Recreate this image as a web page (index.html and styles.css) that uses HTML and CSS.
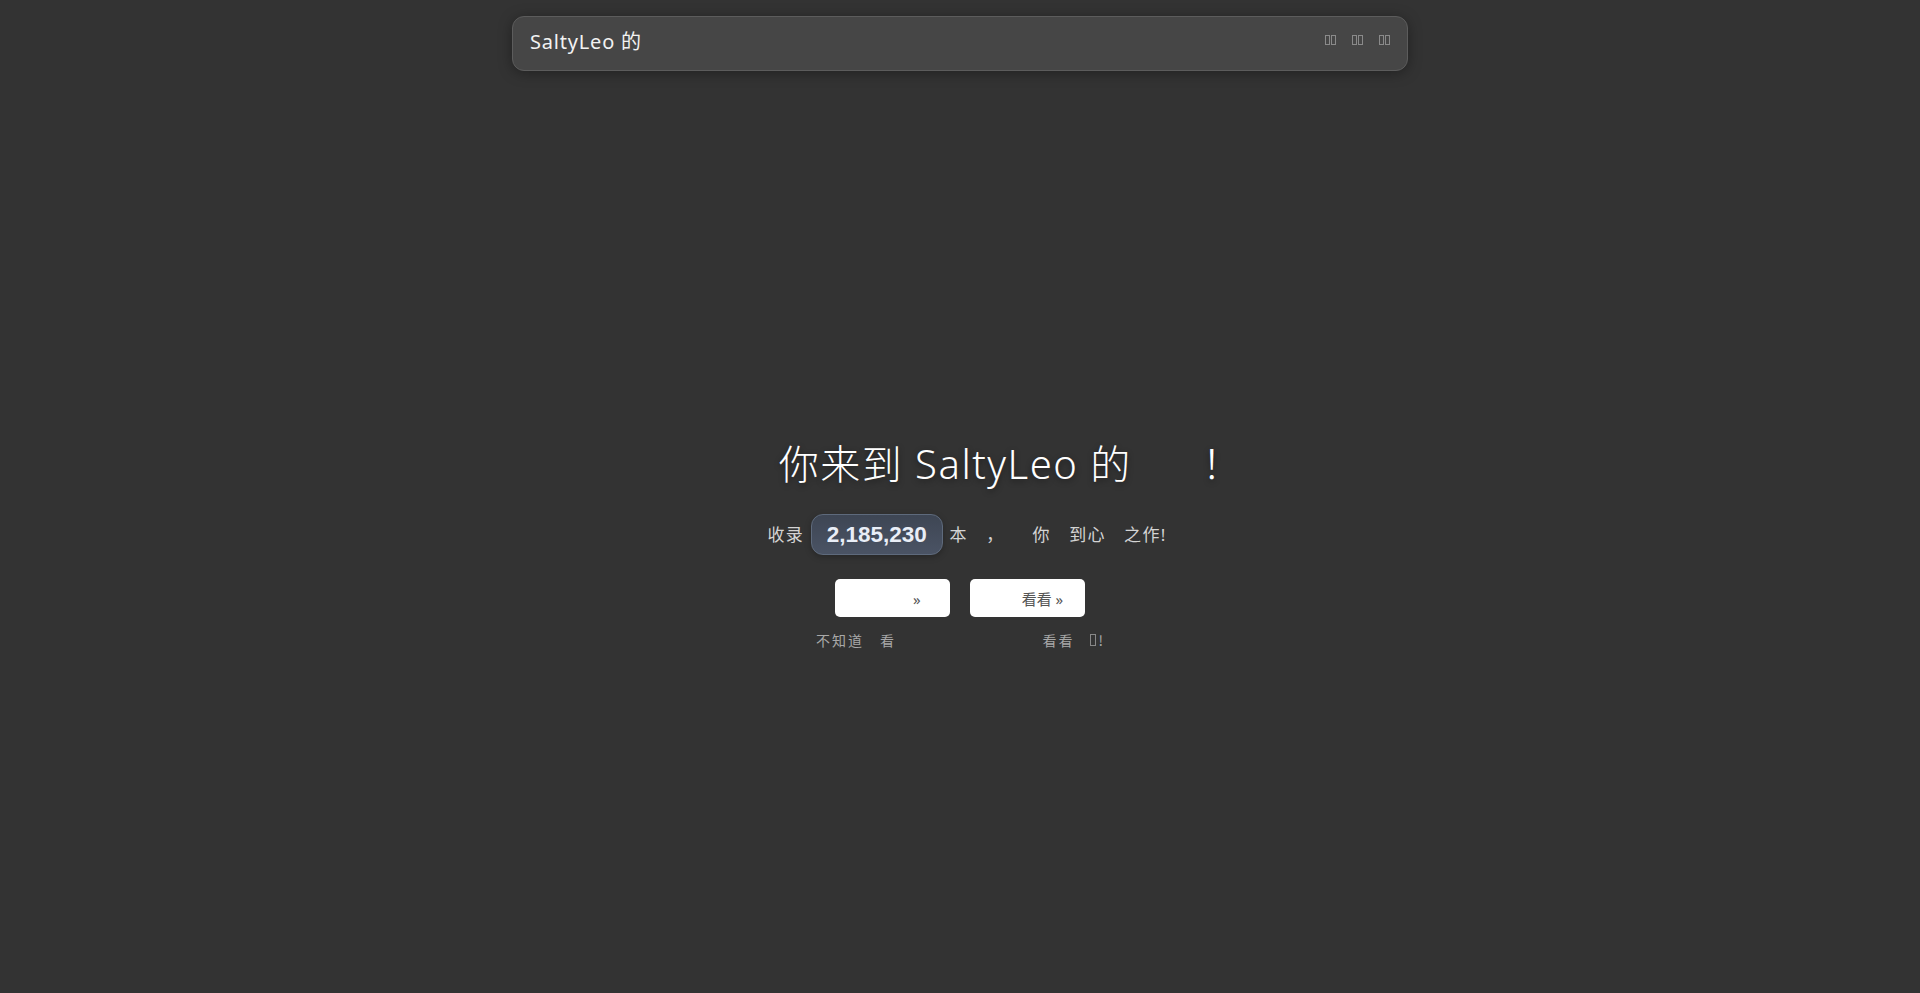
FILE: index.html
```html
<!DOCTYPE html>
<html lang="zh-CN">
<head>
    <meta charset="UTF-8">
    <meta name="viewport" content="width=device-width, initial-scale=1.0">
    <title>SaltyLeo 的</title>
    <link rel="stylesheet" href="styles.css">
</head>
<body>

    <!-- 顶栏 -->
    <header class="topbar">
        <div class="brand">SaltyLeo 的</div>
        <nav class="nav">
            <a href="#"><span class="tofu"></span><span class="tofu"></span></a>
            <a href="#"><span class="tofu"></span><span class="tofu"></span></a>
            <a href="#"><span class="tofu"></span><span class="tofu"></span></a>
        </nav>
    </header>

    <!-- 首屏 -->
    <main class="hero">
        <h1 class="hero-title"><span class="blank blank-lead"></span>你来到 SaltyLeo 的<span class="blank blank-mid"></span>！</h1>

        <p class="stats"><span class="blank blank-stats"></span>收录 <span class="count">2,185,230</span> 本　，　　你　到心　之作!</p>

        <div class="actions">
            <div class="action">
                <button class="btn">　　　 »</button>
                <div class="hint hint-left">不知道　看</div>
            </div>
            <div class="action">
                <button class="btn">　　看看 »</button>
                <div class="hint hint-right">看看　<span class="tofu"></span>!</div>
            </div>
        </div>
    </main>

</body>
</html>
```

FILE: styles.css
```css
body {
    margin: 0;
    background-color: #333;
    color: #eee;
    font-family: "Noto Sans", "Noto Sans CJK SC", sans-serif;
    min-height: 100vh;
}

/* 顶栏 */
.topbar {
    width: 896px;
    height: 55px;
    margin: 16px auto 0;
    box-sizing: border-box;
    padding: 0 17px;
    display: flex;
    align-items: center;
    justify-content: space-between;
    background-color: #464646;
    border: 1px solid #5c5c5c;
    border-radius: 12px;
    box-shadow: 0 2px 14px rgba(0, 0, 0, 0.35);
}

.brand {
    font-size: 20px;
    letter-spacing: 0.8px;
    color: #f2f2f2;
    margin-top: -7px;
}

.nav {
    display: flex;
    gap: 16px;
    margin-bottom: 8px;
}

.nav a {
    display: flex;
    gap: 1px;
    color: #8a8a8a;
    text-decoration: none;
}

.tofu {
    display: inline-block;
    width: 3px;
    height: 8px;
    border: 1px solid currentColor;
}

/* 首屏 */
.hero {
    display: flex;
    flex-direction: column;
    align-items: center;
    padding-top: 369px;
}

.hero-title {
    margin: 0;
    font-size: 40px;
    font-weight: 300;
    line-height: 48px;
    letter-spacing: 1.5px;
    color: #fff;
    text-shadow: 0 2px 6px rgba(0, 0, 0, 0.45);
    white-space: nowrap;
}

.blank {
    display: inline-block;
}

.blank-lead {
    width: 102px;
}

.blank-mid {
    width: 70px;
}

.blank-stats {
    width: 14px;
}

.stats {
    margin: 26px 0 0;
    height: 41px;
    line-height: 41px;
    font-size: 17px;
    color: #d4d4d4;
    letter-spacing: 1.3px;
    white-space: pre;
}

.count {
    margin: 0 1px;
    height: 41px;
    box-sizing: border-box;
    padding: 0 15px;
    display: inline-flex;
    align-items: center;
    vertical-align: top;
    font-family: "Liberation Sans", Arial, sans-serif;
    font-weight: bold;
    font-size: 22.5px;
    letter-spacing: 0;
    color: #e9eef7;
    background: linear-gradient(180deg, #3e4654, #4a5364);
    border: 1px solid #5e6a7c;
    border-radius: 12px;
    box-shadow: 0 2px 6px rgba(0, 0, 0, 0.25);
}

.actions {
    display: flex;
    gap: 20px;
    margin-top: 24px;
}

.action {
    width: 115px;
    display: flex;
    flex-direction: column;
    align-items: center;
}

.btn {
    width: 115px;
    height: 38px;
    border: none;
    border-radius: 5px;
    background-color: #fff;
    color: #555;
    font-family: "Noto Sans", "Noto Sans CJK SC", sans-serif;
    font-size: 15px;
    padding: 0;
    cursor: pointer;
}

.hint {
    margin-top: 13px;
    font-family: "Noto Sans CJK SC", sans-serif;
    font-size: 14px;
    letter-spacing: 2px;
    color: #a8a8a8;
    white-space: pre;
}

.hint-left {
    align-self: flex-start;
    margin-left: -19px;
}

.hint-right {
    align-self: flex-end;
    margin-right: -20px;
}

.hint .tofu {
    width: 4px;
    height: 10px;
    margin-right: 2px;
    border-color: #888;
}
```
